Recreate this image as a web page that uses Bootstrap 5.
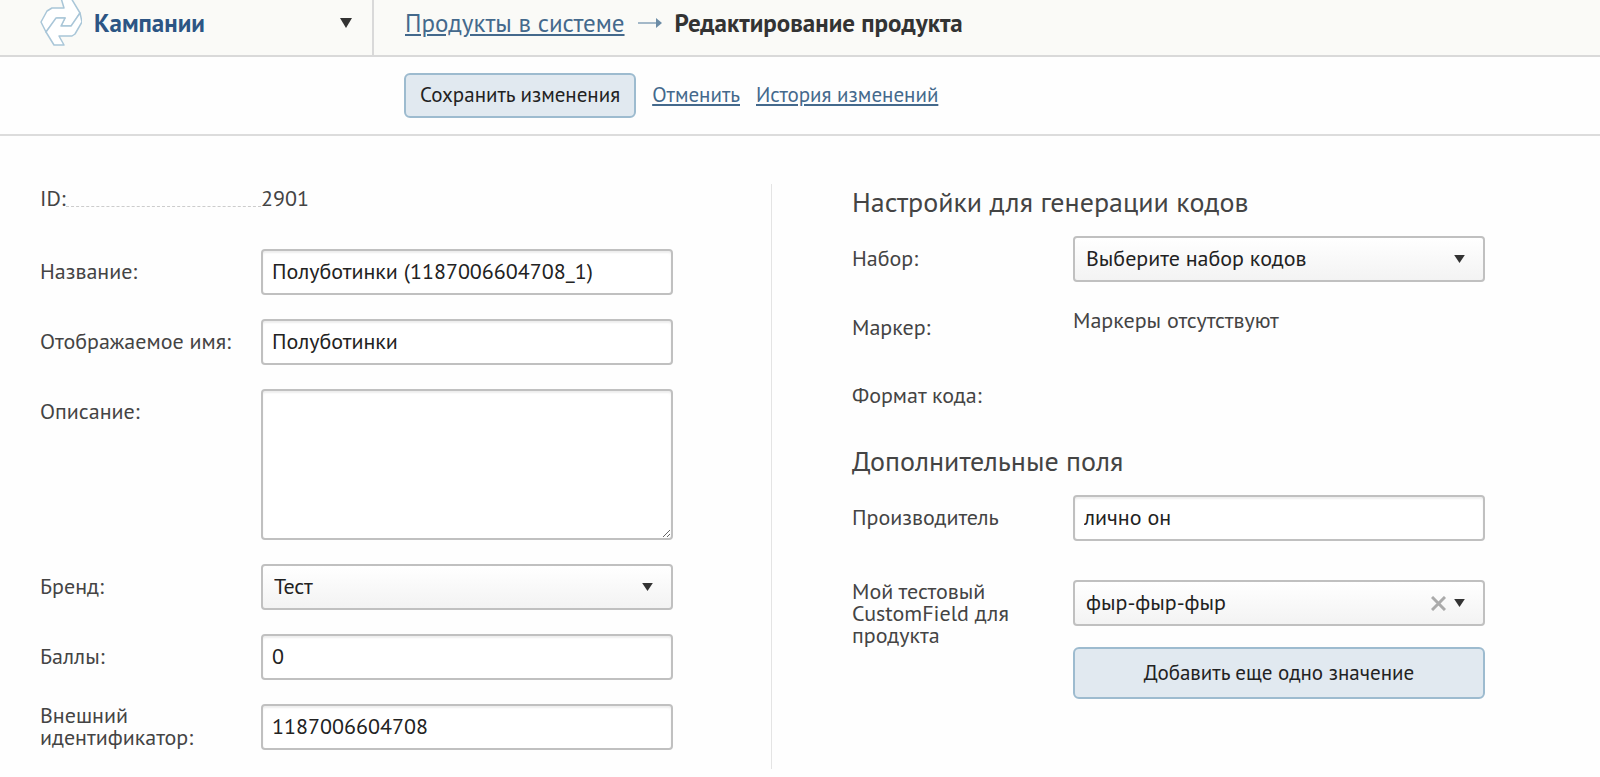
<!DOCTYPE html>
<html lang="ru">
<head>
<meta charset="utf-8">
<meta name="viewport" content="width=device-width, initial-scale=1">
<title>Редактирование продукта</title>
<link href="https://cdn.jsdelivr.net/npm/bootstrap@5.3.0/dist/css/bootstrap.min.css" rel="stylesheet">
<style>
  body { font-family: "PT Sans", Roboto, sans-serif; font-size: 22px; line-height: 22px; color: #444; background: #fefefe; }
  a { color: #44698c; text-underline-offset: 2px; text-decoration-thickness: 2px; }
  .topbar { height: 57px; background: #fafaf7; border-bottom: 2px solid #d9d9d9; }
  .topbar-menu { width: 374px; padding: 0 20px 9px 38px; border: 0; border-right: 2px solid #d9d9d9; background: none; color: #2c5584; font-size: 25px; font-weight: 700; }
  .topbar-path { padding: 0 31px 9px; font-size: 25px; }
  .topbar-path .current { color: #333; font-weight: 700; }
  .actions { padding: 16px 32px 16px 404px; border-bottom: 2px solid #dcdcdc; font-size: 21px; }
  .btn-soft { --bs-btn-bg: #e1e9f0; --bs-btn-border-color: #9dbbcf; --bs-btn-color: #222; --bs-btn-hover-bg: #d5e1eb; --bs-btn-hover-border-color: #8db0c7; --bs-btn-border-radius: 6px; border-width: 2px; font-size: 21px; line-height: 22px; }
  .btn-save { padding: 9px 14px 10px; }
  .actions a { padding-bottom: 2px; }
  .btn-add { padding: 13px 16px; }
  .columns { display: grid; grid-template-columns: 772fr 828fr; padding: 48px 0 8px; }
  .col-main { padding: 0 98px 19px 40px; border-right: 1px solid #e4e4e4; }
  .col-extra { padding: 0 115px 0 80px; }
  .field { display: grid; grid-template-columns: 221px minmax(0, 1fr); margin-bottom: 24px; align-items: start; }
  .col-extra .field { margin-bottom: 23px; }
  .field > label, .field > .caption { height: 45px; display: flex; align-items: center; padding: 0 20px 2px 0; }
  .field > .tall-label { height: 66px; padding-bottom: 0; }
  .id-row { margin-bottom: 40px; padding-top: 3px; }
  .leader { flex: 1; border-bottom: 1px dashed #ccc; margin-bottom: 2px; }
  .id-name { width: 221px; }
  .form-control, .form-select { height: 46px; padding: 7px 9px 9px; border: 2px solid #c0c0c0; border-radius: 4px; font-size: 22px; line-height: 26px; color: #222; background-color: #fff; box-shadow: inset 0 2px 2px #eee; }
  textarea.form-control { height: 151px; }
  .form-select { padding-left: 11px; background: linear-gradient(#fff, #f3f3f3); box-shadow: none; appearance: none; }
  .select-box { position: relative; }
  .select-box + .btn { margin-top: 21px; }
  .select-icons { position: absolute; right: 20px; top: 0; bottom: 0; pointer-events: none; }
  .select-icons button { pointer-events: auto; border: 0; padding: 0; background: none; line-height: 0; }
  h2 { font-size: 28px; line-height: 32px; font-weight: 400; margin: 0 0 18px; padding-top: 2px; }
</style>
</head>
<body>
<header class="topbar d-flex">
  <button type="button" class="topbar-menu d-flex align-items-center">
    <svg width="44" height="50" viewBox="0 0 44 50" fill="#fff" stroke="#a9c6d8" stroke-width="1.5" stroke-linejoin="round" aria-hidden="true">
      <path d="M23 0h10l9 15-8 13H23l4-8h-8l-11 14L3 24l6-11 5-3h12z"/>
      <path d="M42 15l2 9-7 12-3 2H21l5 9H16L8 34l10-14h9l-4 8h10z"/>
    </svg>
    <span class="flex-grow-1 text-start ms-2 ps-1">Кампании</span>
    <svg width="12" height="10" viewBox="0 0 12 10" fill="#333" aria-hidden="true"><path d="M0 0h12L6 10z"/></svg>
  </button>
  <nav class="topbar-path d-flex align-items-center" aria-label="Путь">
    <a href="#">Продукты в системе</a>
    <svg class="mx-2 px-1" width="34" height="12" viewBox="0 0 26 12" aria-hidden="true"><path d="M1 6h20" stroke="#a3b8c8" stroke-width="2"/><path d="M19 1l6 5-6 5z" fill="#6c8ca6"/></svg>
    <span class="current">Редактирование продукта</span>
  </nav>
</header>

<form>
  <div class="actions d-flex align-items-center gap-3">
    <button type="button" class="btn btn-soft btn-save">Сохранить изменения</button>
    <a href="#">Отменить</a>
    <a href="#">История изменений</a>
  </div>

  <main class="columns">
    <section class="col-main">
      <div class="id-row d-flex">
        <div class="id-name d-flex"><span>ID:</span><span class="leader"></span></div>
        <span>2901</span>
      </div>
      <div class="field"><label for="name">Название:</label><input id="name" type="text" class="form-control" value="Полуботинки (1187006604708_1)"></div>
      <div class="field"><label for="shown">Отображаемое имя:</label><input id="shown" type="text" class="form-control" value="Полуботинки"></div>
      <div class="field"><label for="about">Описание:</label><textarea id="about" class="form-control"></textarea></div>
      <div class="field"><label for="brand">Бренд:</label>
        <div class="select-box">
          <select id="brand" class="form-select"><option>Тест</option></select>
          <span class="select-icons d-flex align-items-center"><svg width="11" height="8" viewBox="0 0 12 9" fill="#333"><path d="M0 0h12L6 9z"/></svg></span>
        </div>
      </div>
      <div class="field"><label for="points">Баллы:</label><input id="points" type="text" class="form-control" value="0"></div>
      <div class="field mb-0"><label for="ext">Внешний идентификатор:</label><input id="ext" type="text" class="form-control" value="1187006604708"></div>
    </section>

    <section class="col-extra">
      <h2>Настройки для генерации кодов</h2>
      <div class="field"><label for="set">Набор:</label>
        <div class="select-box">
          <select id="set" class="form-select"><option>Выберите набор кодов</option></select>
          <span class="select-icons d-flex align-items-center"><svg width="11" height="8" viewBox="0 0 12 9" fill="#333"><path d="M0 0h12L6 9z"/></svg></span>
        </div>
      </div>
      <div class="field"><span class="caption">Маркер:</span><span class="pt-1">Маркеры отсутствуют</span></div>
      <div class="field"><span class="caption">Формат кода:</span></div>
      <h2 class="pt-1">Дополнительные поля</h2>
      <div class="field pb-3"><label for="maker">Производитель</label><input id="maker" type="text" class="form-control" value="лично он"></div>
      <div class="field mb-0"><label for="custom" class="tall-label">Мой тестовый CustomField для продукта</label>
        <div>
          <div class="select-box">
            <select id="custom" class="form-select"><option>фыр-фыр-фыр</option></select>
            <span class="select-icons d-flex align-items-center gap-2">
              <button type="button" aria-label="Очистить"><svg width="15" height="15" viewBox="0 0 15 15" stroke="#aaa" stroke-width="3"><path d="M1 1l13 13M14 1L1 14"/></svg></button>
              <svg width="11" height="8" viewBox="0 0 12 9" fill="#333"><path d="M0 0h12L6 9z"/></svg>
            </span>
          </div>
          <button type="button" class="btn btn-soft btn-add w-100">Добавить еще одно значение</button>
        </div>
      </div>
    </section>
  </main>
</form>
<script src="https://cdn.jsdelivr.net/npm/bootstrap@5.3.0/dist/js/bootstrap.bundle.min.js"></script>
</body>
</html>
